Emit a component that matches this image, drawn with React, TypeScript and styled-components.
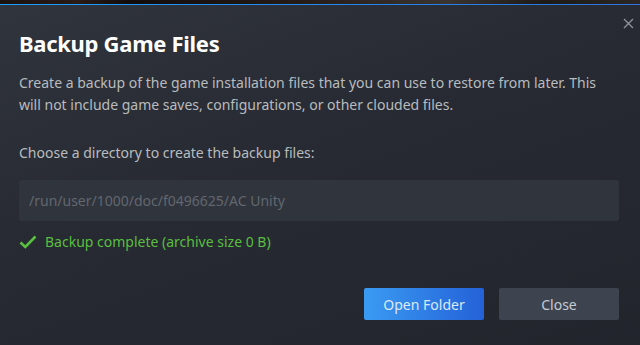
import React from 'react';
import styled, { createGlobalStyle } from 'styled-components';

const GlobalStyle = createGlobalStyle`
  html, body {
    margin: 0;
    padding: 0;
    background: #23262e;
  }
  body {
    font-family: "Noto Sans", "Open Sans", Arial, sans-serif;
    -webkit-font-smoothing: antialiased;
  }
`;

const Page = styled.div`
  width: 640px;
  height: 345px;
  display: flex;
  flex-direction: column;
  overflow: hidden;
`;

const Backdrop = styled.div`
  height: 4px;
  flex: none;
  background: linear-gradient(90deg, #1b1210 0%, #2a1c17 12%, #120d0c 20%, #241a16 45%, #3a3431 70%, #1d1a18 85%, #2c2725 100%);
`;

const AccentLine = styled.div`
  height: 1px;
  flex: none;
  background: linear-gradient(90deg, #1a9fff 0%, #2d73e0 100%);
`;

const Dialog = styled.div`
  position: relative;
  flex: 1;
  display: flex;
  flex-direction: column;
  padding: 24px 21px 0 19px;
  background: linear-gradient(160deg, #30343d 0%, #272a32 45%, #22252c 100%);
  color: #b8bcbf;
`;

const CloseX = styled.button`
  position: absolute;
  top: 7px;
  right: 1px;
  width: 22px;
  height: 22px;
  padding: 0;
  border: none;
  background: transparent;
  display: flex;
  align-items: center;
  justify-content: center;
  cursor: pointer;
`;

const Title = styled.h1`
  margin: 0;
  font-size: 22px;
  line-height: 28px;
  font-weight: 700;
  letter-spacing: -0.3px;
  color: #ffffff;
`;

const Text = styled.p<{ $top: number }>`
  margin: ${p => p.$top}px 0 0;
  font-size: 14px;
  line-height: 22px;
  color: #b8bcbf;
`;

const PathField = styled.div`
  margin-top: 16px;
  height: 41px;
  display: flex;
  align-items: center;
  padding: 0 10px;
  border-radius: 3px;
  background: #30343d;
  font-size: 14px;
  color: #62676e;
`;

const Status = styled.div`
  margin-top: 10px;
  display: flex;
  align-items: center;
  gap: 8px;
  font-size: 14px;
  line-height: 22px;
  color: #59bf40;
`;

const Actions = styled.div`
  margin-top: 35px;
  display: flex;
  justify-content: flex-end;
  gap: 15px;
`;

const Button = styled.button<{ $primary?: boolean }>`
  width: 120px;
  height: 32px;
  border: none;
  border-radius: 2px;
  font-family: inherit;
  font-size: 14px;
  cursor: pointer;
  color: ${p => (p.$primary ? '#dbe9f9' : '#c5cbd4')};
  background: ${p =>
    p.$primary ? 'linear-gradient(90deg, #3a9bf2 0%, #2461d8 100%)' : '#3d4450'};
`;

export default function App() {
  return (
    <Page>
      <GlobalStyle />
      <Backdrop />
      <AccentLine />
      <Dialog>
        <CloseX aria-label="Close">
          <svg width="11" height="11" viewBox="0 0 11 11">
            <path d="M1 1L10 10M10 1L1 10" stroke="#8b929a" strokeWidth="1.4" />
          </svg>
        </CloseX>
        <Title>Backup Game Files</Title>
        <Text $top={15}>
          Create a backup of the game installation files that you can use to restore from later. This
          will not include game saves, configurations, or other clouded files.
        </Text>
        <Text $top={26}>Choose a directory to create the backup files:</Text>
        <PathField>/run/user/1000/doc/f0496625/AC Unity</PathField>
        <Status>
          <svg width="18" height="14" viewBox="0 0 18 14">
            <path d="M1.5 7.5L6.3 12L16.5 1.5" fill="none" stroke="#59bf40" strokeWidth="2.6" />
          </svg>
          Backup complete (archive size 0 B)
        </Status>
        <Actions>
          <Button $primary>Open Folder</Button>
          <Button>Close</Button>
        </Actions>
      </Dialog>
    </Page>
  );
}
